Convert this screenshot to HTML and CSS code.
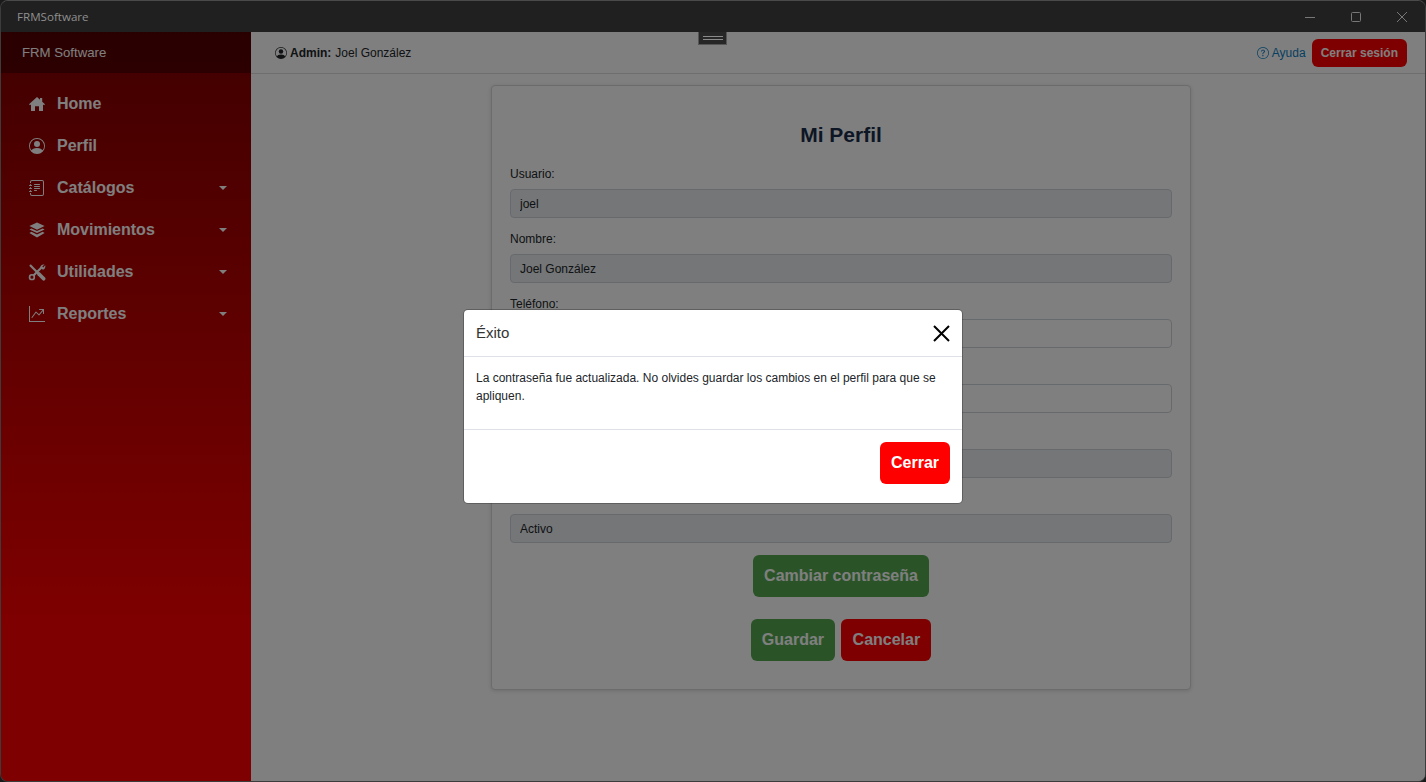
FILE: index.html
```html
<!DOCTYPE html>
<html lang="es">
<head>
    <meta charset="UTF-8">
    <meta name="viewport" content="width=device-width, initial-scale=1.0">
    <title>FRMSoftware</title>
    <link rel="stylesheet" href="styles.css">
</head>
<body>
    <div class="window">
        <div class="titlebar">
            <span class="titlebar-name">FRMSoftware</span>
            <div class="window-controls">
                <svg width="12" height="12" viewBox="0 0 12 12"><path d="M1 6.5h10" stroke="currentColor" fill="none"/></svg>
                <svg width="12" height="12" viewBox="0 0 12 12"><rect x="1.5" y="1.5" width="9" height="9" rx="1" stroke="currentColor" fill="none"/></svg>
                <svg width="12" height="12" viewBox="0 0 12 12"><path d="M1 1l10 10M11 1L1 11" stroke="currentColor" fill="none"/></svg>
            </div>
        </div>

        <div class="app">
            <aside class="sidebar">
                <div class="brand">FRM Software</div>
                <nav class="menu">
                    <a class="menu-item">
                        <svg class="menu-icon" viewBox="0 0 16 16"><path d="M8 1l3 2.700V2h2.200v3.700L16 8.300l-.9 1L14 8.400V15H10V10.200H6V15H2V8.400L.9 9.300l-.9-1z"/></svg>
                        <span>Home</span>
                    </a>
                    <a class="menu-item">
                        <svg class="menu-icon" viewBox="0 0 16 16"><path d="M11 6a3 3 0 1 1-6 0 3 3 0 0 1 6 0"/><path fill-rule="evenodd" d="M0 8a8 8 0 1 1 16 0A8 8 0 0 1 0 8m8-7a7 7 0 0 0-5.468 11.37C3.242 11.226 4.805 10 8 10s4.757 1.225 5.468 2.37A7 7 0 0 0 8 1"/></svg>
                        <span>Perfil</span>
                    </a>
                    <a class="menu-item">
                        <svg class="menu-icon" viewBox="0 0 16 16"><path d="M5 10.5a.5.5 0 0 1 .5-.5h2a.5.5 0 0 1 0 1h-2a.5.5 0 0 1-.5-.5m0-2a.5.5 0 0 1 .5-.5h5a.5.5 0 0 1 0 1h-5a.5.5 0 0 1-.5-.5m0-2a.5.5 0 0 1 .5-.5h5a.5.5 0 0 1 0 1h-5a.5.5 0 0 1-.5-.5m0-2a.5.5 0 0 1 .5-.5h5a.5.5 0 0 1 0 1h-5a.5.5 0 0 1-.5-.5"/><path d="M3 0h10a2 2 0 0 1 2 2v12a2 2 0 0 1-2 2H3a2 2 0 0 1-2-2v-1h1v1a1 1 0 0 0 1 1h10a1 1 0 0 0 1-1V2a1 1 0 0 0-1-1H3a1 1 0 0 0-1 1v1H1V2a2 2 0 0 1 2-2"/><path d="M1 5v-.5a.5.5 0 0 1 1 0V5h.5a.5.5 0 0 1 0 1h-2a.5.5 0 0 1 0-1zm0 3v-.5a.5.5 0 0 1 1 0V8h.5a.5.5 0 0 1 0 1h-2a.5.5 0 0 1 0-1zm0 3v-.5a.5.5 0 0 1 1 0v.5h.5a.5.5 0 0 1 0 1h-2a.5.5 0 0 1 0-1z"/></svg>
                        <span>Catálogos</span>
                        <i class="caret"></i>
                    </a>
                    <a class="menu-item">
                        <svg class="menu-icon" viewBox="0 0 16 16"><path d="M8 .5l7.600 3.600L8 7.700.4 4.100z"/><path d="M2.400 6.400L.4 7.500 8 11.100l7.600-3.600-2-1.100L8 9z"/><path d="M2.400 9.800l-2 1.100L8 15.500l7.600-4.600-2-1.100L8 12.400z"/></svg>
                        <span>Movimientos</span>
                        <i class="caret"></i>
                    </a>
                    <a class="menu-item">
                        <svg class="menu-icon tools-icon" viewBox="0 0 16 16">
                            <path d="M1.500 1.500l8.500 8.500" fill="none" stroke="currentColor" stroke-width="2"/>
                            <path d="M9.800 9.800l4.400 4.400" fill="none" stroke="currentColor" stroke-width="3.400" stroke-linecap="round"/>
                            <path d="M4.800 11.200l7.600-7.600" fill="none" stroke="currentColor" stroke-width="2"/>
                            <path d="M15.600 1.800c.6 1.800-.4 3.800-2.200 4.200l-2.400-2.400c.3-1.800 2.100-3 3.900-2.500L12.900 3l.9.9z"/>
                            <circle cx="3.300" cy="12.800" r="2.200" fill="none" stroke="currentColor" stroke-width="1.500"/>
                        </svg>
                        <span>Utilidades</span>
                        <i class="caret"></i>
                    </a>
                    <a class="menu-item">
                        <svg class="menu-icon" viewBox="0 0 16 16"><path fill-rule="evenodd" d="M0 0h1v15h15v1H0zm10 3.500a.5.5 0 0 1 .5-.5h4a.5.5 0 0 1 .5.5v4a.5.5 0 0 1-1 0V4.900l-3.613 4.417a.5.5 0 0 1-.74.037L7.060 6.767l-3.656 5.027a.5.5 0 0 1-.808-.588l4-5.500a.5.5 0 0 1 .758-.06l2.609 2.610L13.445 4H10.500a.5.5 0 0 1-.5-.5"/></svg>
                        <span>Reportes</span>
                        <i class="caret"></i>
                    </a>
                </nav>
            </aside>

            <div class="page">
                <header class="topbar">
                    <div class="user">
                        <svg class="user-icon" viewBox="0 0 16 16"><path d="M11 6a3 3 0 1 1-6 0 3 3 0 0 1 6 0"/><path fill-rule="evenodd" d="M0 8a8 8 0 1 1 16 0A8 8 0 0 1 0 8m8-7a7 7 0 0 0-5.468 11.370C3.242 11.226 4.805 10 8 10s4.757 1.225 5.468 2.370A7 7 0 0 0 8 1"/></svg>
                        <b>Admin:</b> Joel González
                    </div>
                    <div class="topbar-actions">
                        <a class="help">
                            <svg class="user-icon" viewBox="0 0 16 16"><path d="M8 15A7 7 0 1 1 8 1a7 7 0 0 1 0 14m0 1A8 8 0 1 0 8 0a8 8 0 0 0 0 16"/><path d="M5.255 5.786a.237.237 0 0 0 .241.247h.825c.138 0 .248-.113.266-.25.09-.656.54-1.134 1.342-1.134.686 0 1.314.343 1.314 1.168 0 .635-.374.927-.965 1.371-.673.489-1.206 1.060-1.168 1.987l.003.217a.25.25 0 0 0 .25.246h.811a.25.25 0 0 0 .25-.25v-.105c0-.718.273-.927 1.010-1.486.609-.463 1.244-.977 1.244-2.056 0-1.511-1.276-2.241-2.673-2.241-1.267 0-2.655.59-2.750 2.286m1.557 5.763c0 .533.425.927 1.010.927.609 0 1.028-.394 1.028-.927 0-.552-.42-.94-1.029-.94-.584 0-1.009.388-1.009.94"/></svg>
                            Ayuda
                        </a>
                        <button class="btn btn-red btn-small">Cerrar sesión</button>
                    </div>
                </header>

                <main class="content">
                    <form class="card">
                        <h2>Mi Perfil</h2>
                        <div class="field"><label>Usuario:</label><input type="text" value="joel" readonly></div>
                        <div class="field"><label>Nombre:</label><input type="text" value="Joel González" readonly></div>
                        <div class="field"><label>Teléfono:</label><input type="text" class="white" readonly></div>
                        <div class="field"><label>&nbsp;</label><input type="text" class="white" readonly></div>
                        <div class="field"><label>&nbsp;</label><input type="text" readonly></div>
                        <div class="field"><label>&nbsp;</label><input type="text" value="Activo" readonly></div>
                        <div class="form-row change-row">
                            <button type="button" class="btn btn-green">Cambiar contraseña</button>
                        </div>
                        <div class="form-row">
                            <button type="button" class="btn btn-green">Guardar</button>
                            <button type="button" class="btn btn-red">Cancelar</button>
                        </div>
                    </form>
                </main>
            </div>

            <div class="backdrop">
                <div class="modal">
                    <div class="modal-header">
                        <span class="modal-title">Éxito</span>
                        <svg class="modal-close" viewBox="0 0 17 17"><path d="M1 1l15 15M16 1L1 16" stroke="#000" stroke-width="2" fill="none"/></svg>
                    </div>
                    <div class="modal-body">La contraseña fue actualizada. No olvides guardar los cambios en el perfil para que se apliquen.</div>
                    <div class="modal-footer">
                        <button class="btn btn-bright">Cerrar</button>
                    </div>
                </div>
            </div>

            <div class="drag-handle"><span></span></div>
        </div>
    </div>
</body>
</html>
```

FILE: styles.css
```css
* {
    box-sizing: border-box;
}
html, body {
    height: 100%;
}
body {
    margin: 0;
    background-color: #1a1a1a;
    font-family: "Liberation Sans", Arial, sans-serif;
    font-size: 12px;
    overflow: hidden;
}
.window {
    height: 100%;
    display: flex;
    flex-direction: column;
    border: 1px solid #3c3c3c;
    border-top-color: #4a4a4a;
    border-radius: 8px;
    overflow: hidden;
}
.titlebar {
    height: 31px;
    flex: none;
    display: flex;
    justify-content: space-between;
    align-items: center;
    background-color: #202020;
    color: #8f8f8f;
    padding-left: 16px;
}
.titlebar-name {
    font-family: "Open Sans", sans-serif;
    font-size: 11.6px;
}
.window-controls {
    display: flex;
    gap: 34px;
    padding-right: 17px;
    color: #777;
}
.window-controls svg {
    display: block;
}

.app {
    flex: 1;
    display: flex;
    position: relative;
    min-height: 0;
}
.sidebar {
    width: 250px;
    flex: none;
    background: linear-gradient(to bottom, #800000, #ff0000 80%);
    color: #fff;
}
.brand {
    height: 41px;
    padding-left: 21px;
    line-height: 41px;
    font-size: 13.2px;
    background-color: rgba(0, 0, 0, 0.35);
}
.menu {
    padding-top: 10px;
}
.menu-item {
    height: 42px;
    display: flex;
    align-items: center;
    gap: 12px;
    padding: 0 24px 0 28px;
    font-size: 16px;
    font-weight: bold;
}
.menu-icon {
    width: 16px;
    height: 16px;
    fill: currentColor;
    overflow: visible;
}
.tools-icon {
    transform: scale(1.08);
}
.caret {
    margin-left: auto;
    border-left: 4px solid transparent;
    border-right: 4px solid transparent;
    border-top: 4px solid #fff;
}

.page {
    flex: 1;
    min-width: 0;
    display: flex;
    flex-direction: column;
    background-color: #fff;
}
.topbar {
    height: 42px;
    flex: none;
    display: flex;
    justify-content: space-between;
    align-items: center;
    padding: 0 18px 0 24px;
    border-bottom: 1px solid #dcdcdc;
}
.user {
    display: flex;
    align-items: center;
    gap: 3px;
    color: #212529;
}
.user b {
    margin-right: 1px;
}
.user-icon {
    width: 12px;
    height: 12px;
    fill: currentColor;
}
.topbar-actions {
    display: flex;
    align-items: center;
    gap: 6px;
}
.help {
    display: flex;
    align-items: center;
    gap: 3px;
    color: #0d7fc4;
}

.content {
    flex: 1;
    padding: 11px 0 0 6px;
}
.card {
    width: 700px;
    margin: 0 auto;
    padding: 37px 18px 28px;
    background-color: #fff;
    border: 1px solid #d8d8d8;
    border-radius: 4px;
    box-shadow: 0 1px 4px rgba(0, 0, 0, 0.15);
}
.card h2 {
    margin: 0 0 17px;
    font-size: 21px;
    line-height: 24px;
    text-align: center;
    color: #1a2c4a;
}
.field {
    margin-bottom: 11px;
}
.field label {
    display: block;
    line-height: 18px;
    padding-top: 1px;
    height: 19px;
    margin-bottom: 6px;
    color: #212529;
}
.field input {
    display: block;
    width: 100%;
    height: 29px;
    padding: 0 9px;
    font-family: inherit;
    font-size: 12px;
    color: #212529;
    background-color: #e9ecef;
    border: 1px solid #ced4da;
    border-radius: 4px;
}
.field input.white {
    background-color: #fff;
}
.form-row {
    display: flex;
    justify-content: center;
    gap: 6px;
}
.change-row {
    margin: 12px 0 22px;
}

.btn {
    height: 42px;
    padding: 0 11.25px;
    border: none;
    border-radius: 6px;
    font-family: inherit;
    font-size: 16px;
    font-weight: bold;
    color: #fff;
}
.btn-small {
    height: 28px;
    padding: 0 9px;
    font-size: 12px;
}
.btn-green {
    background-color: #54a84f;
}
.btn-red {
    background-color: #ff0000;
}
.btn-bright {
    padding: 0 11px;
    background-color: #ff0000;
}

/* dim layer and dialog sit over everything below the title bar */
.backdrop {
    position: absolute;
    inset: 0;
    display: flex;
    justify-content: center;
    align-items: center;
    background-color: rgba(0, 0, 0, 0.5);
}
.modal {
    width: 498px;
    background-color: #fff;
    border-radius: 4px;
    box-shadow: 0 0 0 1px rgba(0, 0, 0, 0.25);
    color: #212529;
}
.modal-header {
    height: 47px;
    display: flex;
    justify-content: space-between;
    align-items: center;
    padding: 0 12px;
    border-bottom: 1px solid #dee2e6;
}
.modal-title {
    font-size: 15px;
    padding-bottom: 2px;
    color: #333;
}
.modal-close {
    width: 17px;
    height: 17px;
}
.modal-body {
    height: 73px;
    padding: 12px;
    line-height: 18px;
    border-bottom: 1px solid #dee2e6;
}
.modal-footer {
    display: flex;
    justify-content: flex-end;
    padding: 12px;
    height: 73px;
}
.drag-handle {
    position: absolute;
    top: 0;
    left: 697px;
    width: 29px;
    height: 13px;
    display: flex;
    justify-content: center;
    align-items: center;
    background-color: #262626;
    border: 1px solid #555;
    border-top: none;
}
.drag-handle span {
    width: 20px;
    height: 4px;
    border-top: 1px solid #8a8a8a;
    border-bottom: 1px solid #8a8a8a;
}
```
